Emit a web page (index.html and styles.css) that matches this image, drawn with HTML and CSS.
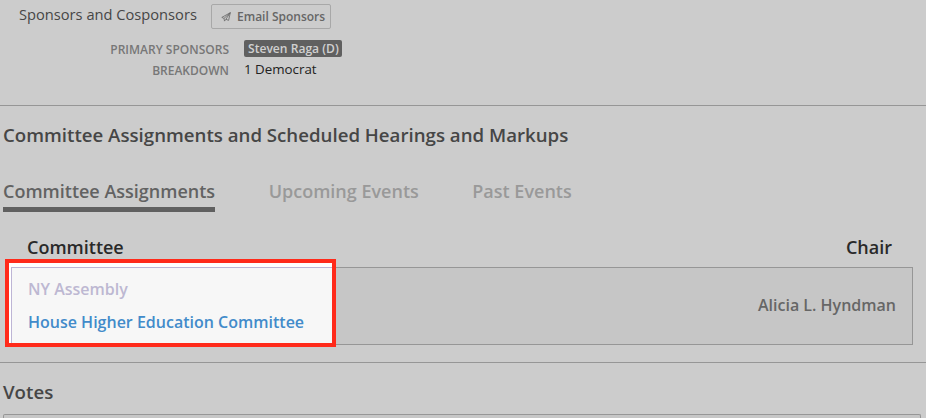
FILE: index.html
```
<!DOCTYPE html>
<html lang="en">
<head>
    <meta charset="UTF-8">
    <meta name="viewport" content="width=device-width, initial-scale=1.0">
    <title>Bill Details</title>
    <link rel="stylesheet" href="styles.css">
</head>
<body>
    <section class="sponsors">
        <div class="sponsors-header">
            <h3>Sponsors and Cosponsors</h3>
            <button class="email-btn">
                <svg class="plane" viewBox="0 0 10 10" width="10" height="10">
                    <path d="M9.3 0.7 L0.8 5.4 L3 6.4 L3.5 9.1 L4.9 7.3 L7.6 8.4 Z M9.3 0.7 L3 6.4 M9.3 0.7 L4.9 7.3"/>
                </svg>
                <span>Email Sponsors</span>
            </button>
        </div>
        <dl class="details">
            <dt>PRIMARY SPONSORS</dt>
            <dd><a class="badge">Steven Raga (D)</a></dd>
            <dt>BREAKDOWN</dt>
            <dd>1 Democrat</dd>
        </dl>
    </section>

    <section class="committees">
        <h2>Committee Assignments and Scheduled Hearings and Markups</h2>
        <nav class="tabs">
            <a class="tab active">Committee Assignments</a>
            <a class="tab">Upcoming Events</a>
            <a class="tab">Past Events</a>
        </nav>
        <div class="table-head">
            <span>Committee</span>
            <span>Chair</span>
        </div>
        <div class="table-row">
            <div class="highlight"></div>
            <div class="committee">
                <span class="chamber">NY Assembly</span>
                <a class="committee-link">House Higher Education Committee</a>
            </div>
            <span class="chair">Alicia L. Hyndman</span>
        </div>
    </section>

    <section class="votes">
        <h2>Votes</h2>
        <div class="votes-box"></div>
    </section>
</body>
</html>
```
FILE: styles.css
```
* {
    margin: 0;
    padding: 0;
    box-sizing: border-box;
}

body {
    height: 418px;
    overflow: hidden;
    font-family: "Open Sans", sans-serif;
    background: #cccccc;
    color: #464646;
}

h2 {
    font-size: 18.66px;
    font-weight: 600;
    line-height: 24px;
}

.sponsors {
    height: 106px;
    padding-top: 4px;
    border-bottom: 1px solid #969696;
}

.sponsors-header {
    display: flex;
    gap: 14px;
    padding-left: 19px;
}

.sponsors-header h3 {
    width: 178px;
    font-size: 14.67px;
    font-weight: 400;
    line-height: 21px;
    white-space: nowrap;
}

.email-btn {
    display: flex;
    align-items: center;
    gap: 6px;
    width: 120px;
    height: 25px;
    padding: 0 0 0 9px;
    border: 1px solid #a8a8a8;
    border-radius: 2px;
    background: transparent;
    font-family: inherit;
    font-size: 12px;
    font-weight: 600;
    color: #666666;
    white-space: nowrap;
}

.plane {
    flex: none;
    fill: none;
    stroke: #666666;
    stroke-width: 0.8;
    stroke-linejoin: round;
}

.details {
    display: grid;
    grid-template-columns: 229px 1fr;
    column-gap: 15px;
    padding-top: 9px;
    line-height: 21px;
}

.details dt {
    font-size: 12px;
    font-weight: 600;
    text-align: right;
    color: #777777;
    padding-top: 1px;
    height: 21px;
}

.details dd {
    height: 21px;
    font-size: 13.33px;
    color: #222222;
}

.badge {
    display: block;
    width: 98px;
    height: 17px;
    margin-top: 2px;
    padding-left: 4px;
    border-radius: 2px;
    background: #606060;
    color: #d0d0d0;
    font-size: 12.1px;
    font-weight: 600;
    line-height: 17px;
    white-space: nowrap;
}

.committees {
    height: 257px;
    padding: 17px 13px 0 3px;
    border-bottom: 1px solid #969696;
}

.tabs {
    display: flex;
    gap: 53.5px;
    margin-top: 32px;
}

.tab {
    height: 33px;
    font-size: 18px;
    font-weight: 600;
    line-height: 24px;
    color: #999999;
}

.tab.active {
    color: #626262;
    border-bottom: 5px solid #606060;
}

.table-head {
    display: flex;
    justify-content: space-between;
    padding: 0 21px 0 24px;
    margin-top: 23px;
    font-size: 18px;
    font-weight: 600;
    line-height: 24px;
    color: #292929;
}

.table-row {
    position: relative;
    display: flex;
    align-items: center;
    justify-content: space-between;
    height: 78px;
    margin: 8px 0 0 8px;
    padding: 0 16px 2px 16px;
    border: 1px solid #969696;
    background: #c6c6c6;
    font-size: 16px;
    font-weight: 600;
}

/* callout around the committee cell */
.highlight {
    position: absolute;
    left: -7px;
    top: -9px;
    width: 331px;
    height: 88px;
    border: 4px solid #ff2a1a;
    background: #ffffff;
}

.highlight::before {
    content: "";
    position: absolute;
    inset: 4px 0 0 2px;
    border: 1px solid #bdb5d5;
    border-width: 1px 0 0 1px;
    background: #f7f7f7;
}

.committee {
    position: relative;
    display: flex;
    flex-direction: column;
    gap: 9px;
    line-height: 24px;
}

.chamber {
    color: #bdb8d2;
}

.committee-link {
    color: #428bca;
}

.chair {
    color: #666666;
}

.votes {
    padding: 17px 5px 0 3px;
}

.votes-box {
    height: 4px;
    margin-top: 10px;
    border: 1px solid #969696;
    border-bottom: none;
    border-radius: 2px 2px 0 0;
    background: #c6c6c6;
}
```
